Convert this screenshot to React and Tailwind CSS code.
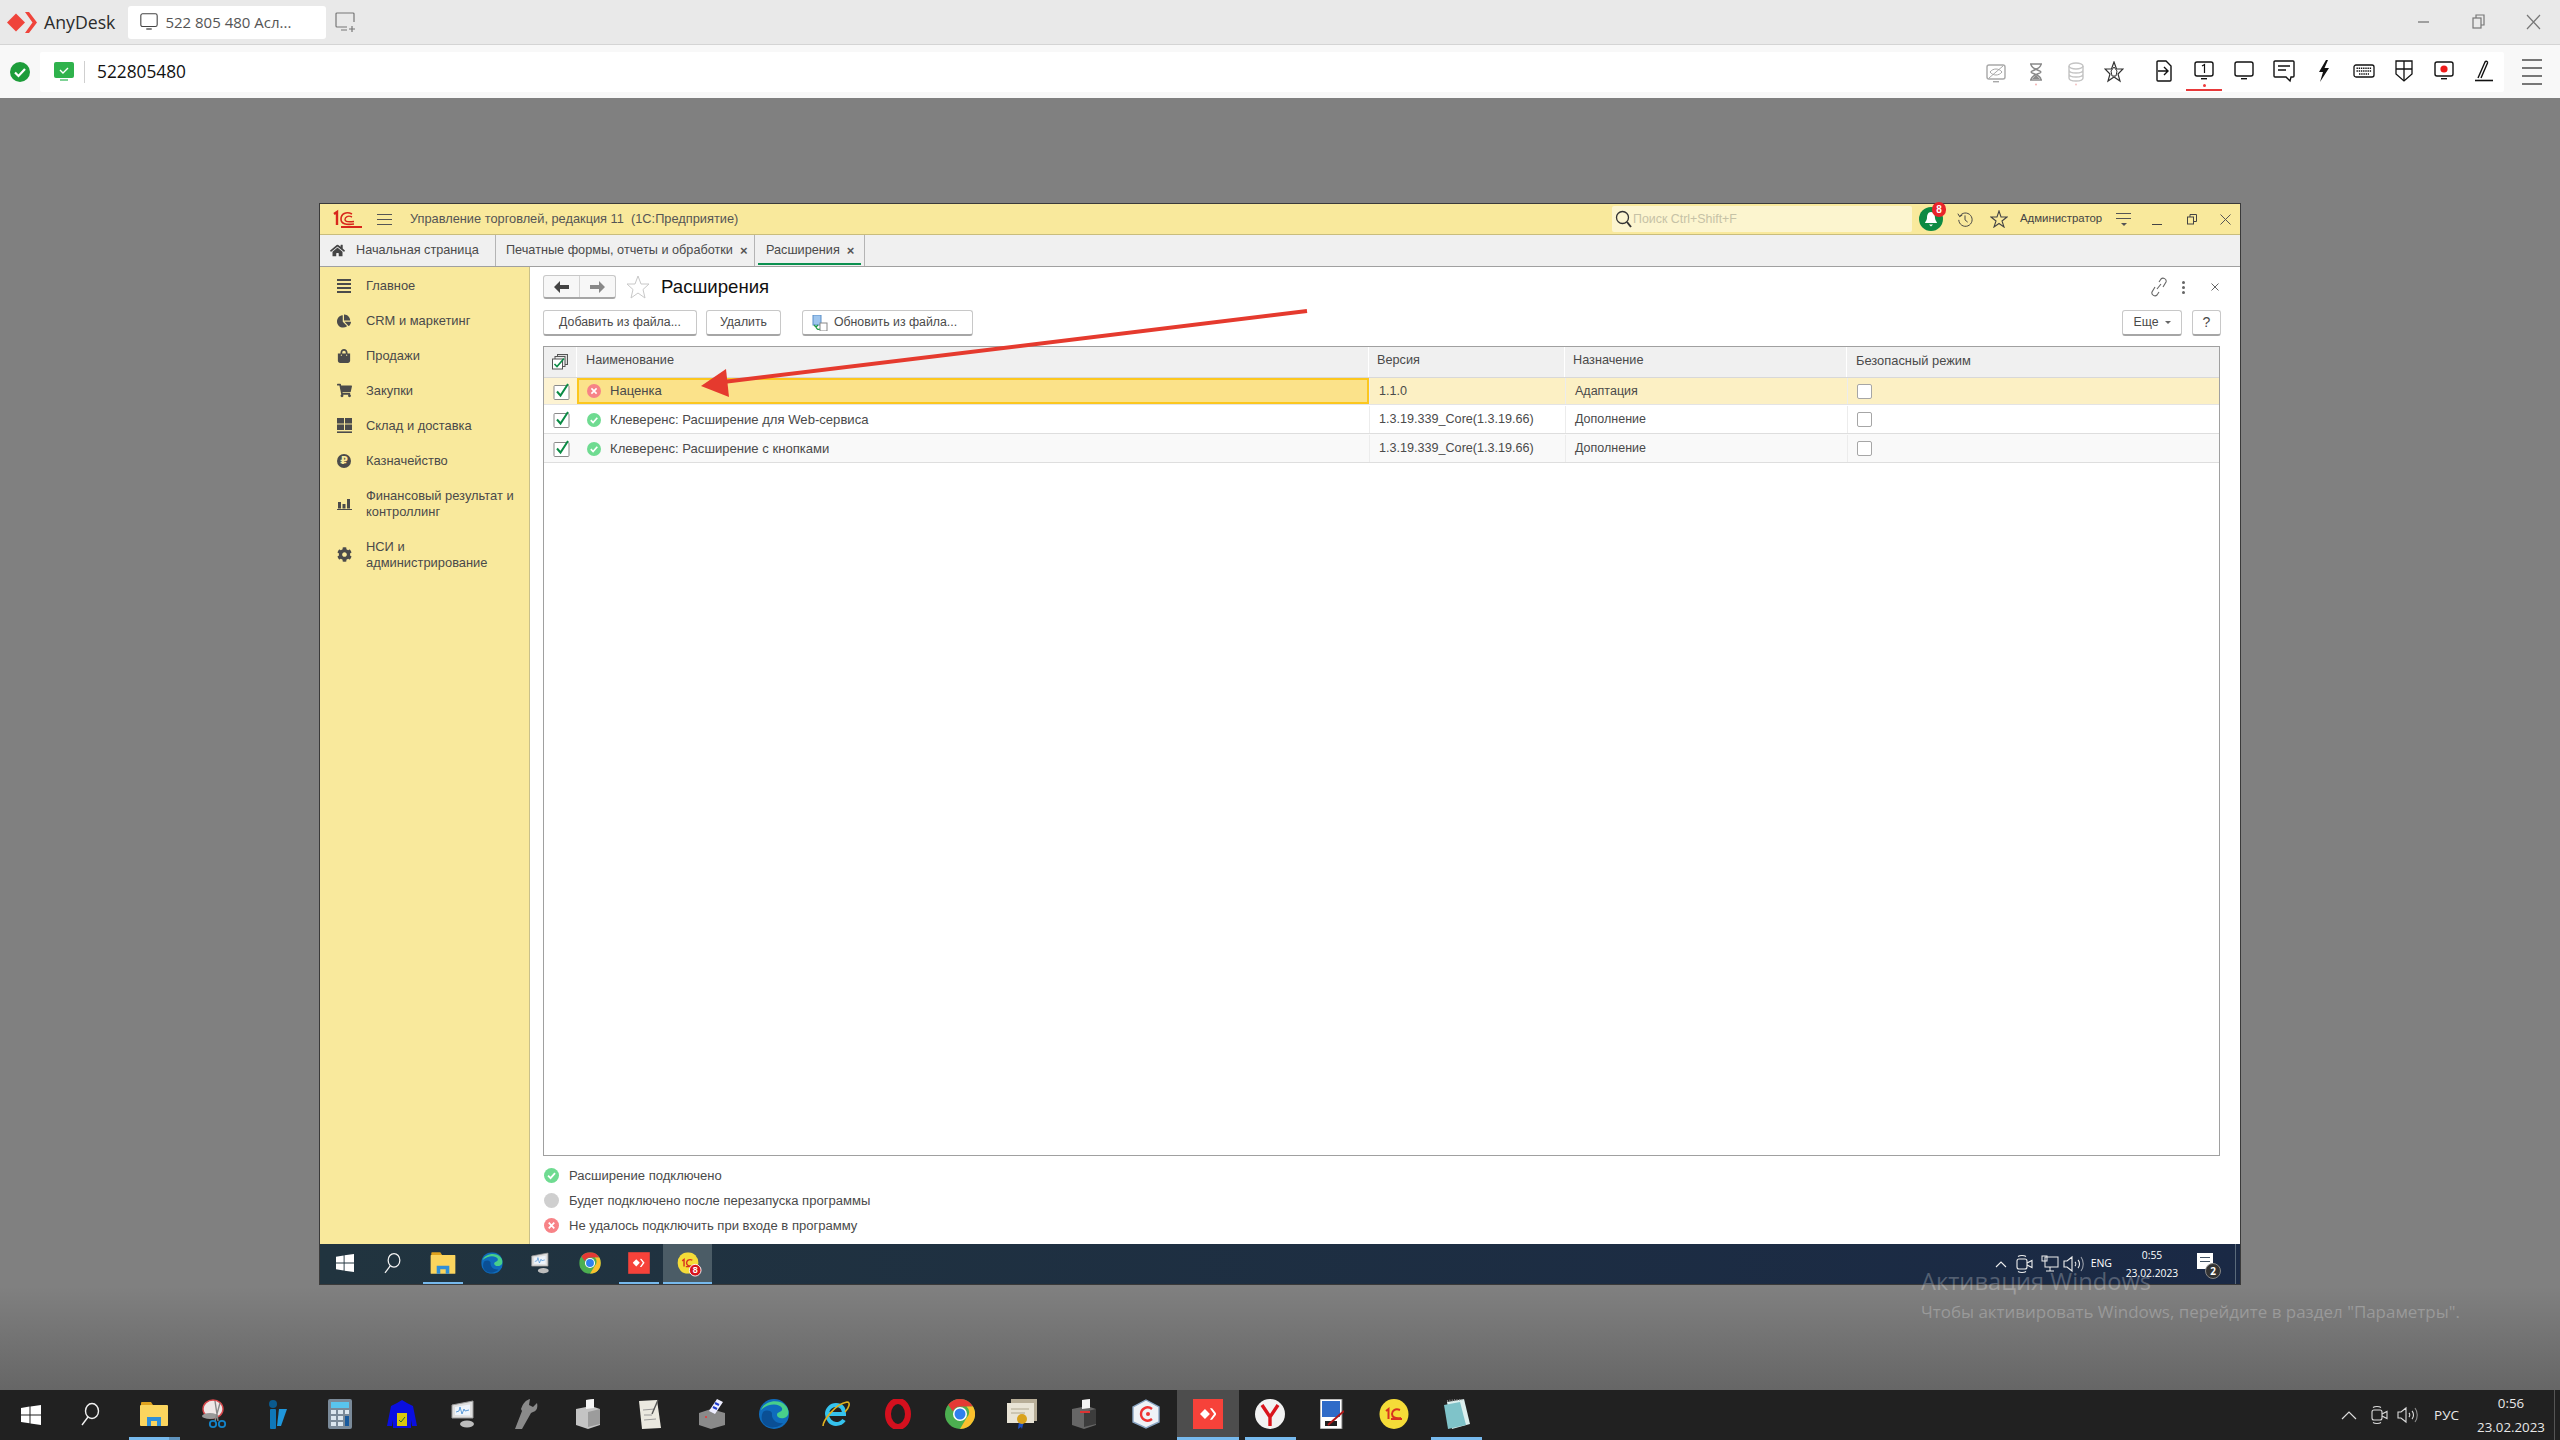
import { FaHome, FaChartPie, FaShoppingBag, FaShoppingCart, FaCog } from "react-icons/fa";

const open = "font-['Open_Sans',sans-serif]";

// ---- anydesk chrome icons ----
const AdLogo = ({ className = "", color = "#ef443b", w = 30, h = 21 }) => (
  <svg width={w} height={h} viewBox="0 0 30 21" className={className} fill={color}>
    <polygon points="0,10.5 9,1.5 18,10.5 9,19.5" />
    <polygon points="18,0 22,0 30,10.5 22,21 18,21 25.5,10.5" />
  </svg>
);

const Screen = ({ children, stroke = "#222", sw = 1.4, size = 22 }) => (
  <svg width={size} height={size} viewBox="0 0 22 22" fill="none" stroke={stroke} strokeWidth={sw}>
    <rect x="2" y="2" width="18" height="14" rx="2" />
    <rect x="8" y="18" width="6" height="1.4" fill={stroke} stroke="none" />
    {children}
  </svg>
);

const ToolIcons = {
  noview: () => (
    <Screen stroke="#a8a8a8">
      <path d="M5 9c3-4 9-4 12 0-3 4-9 4-12 0z" strokeWidth="1" />
      <path d="M4 15L18 3" strokeWidth="1" />
    </Screen>
  ),
  hourglass: () => (
    <svg width="18" height="24" viewBox="0 0 18 24" fill="none" stroke="#8a8a8a" strokeWidth="1.4">
      <path d="M3 2h12M3 18h12M4 2c0 6 10 6 10 8s-10 2-10 8M14 2c0 6-10 6-10 8s10 2 10 8" />
      <path d="M5 17l4-4 4 4z" fill="#8a8a8a" stroke="none" />
      <circle cx="9" cy="22.5" r="1" fill="#f6b4b4" stroke="none" />
    </svg>
  ),
  db: () => (
    <svg width="18" height="24" viewBox="0 0 18 24" fill="none" stroke="#c4c4c4" strokeWidth="1.4">
      <ellipse cx="9" cy="4" rx="7" ry="3" />
      <path d="M2 4v12c0 4 14 4 14 0V4M2 8c0 4 14 4 14 0M2 12c0 4 14 4 14 0" />
      <circle cx="9" cy="22.5" r="1" fill="#f6c4c4" stroke="none" />
    </svg>
  ),
  star: () => (
    <svg width="20" height="22" viewBox="0 0 20 22" fill="none" stroke="#333" strokeWidth="1">
      <polygon points="10,1 12.5,8 19,8 14,13 16,20 10,16 4,20 6,13 1,8 7.5,8" strokeWidth="1.2" />
      <polygon points="10,6 13,10 12,15 8,15 7,10" />
    </svg>
  ),
  file: () => (
    <svg width="16" height="22" viewBox="0 0 16 22" fill="none" stroke="#111" strokeWidth="1.4">
      <path d="M2 1h8l5 5v14a1 1 0 0 1-1 1H2a1 1 0 0 1-1-1V2a1 1 0 0 1 1-1z" />
      <path d="M2 11h10M8 7l4 4-4 4" />
    </svg>
  ),
  one: () => (
    <Screen stroke="#111">
      <path d="M9 6l2.5-1.5V13" strokeWidth="1.2" />
    </Screen>
  ),
  screen: () => <Screen stroke="#111" />,
  chat: () => (
    <svg width="22" height="24" viewBox="0 0 22 24" fill="none" stroke="#111" strokeWidth="1.4">
      <path d="M2 2h18a1 1 0 0 1 1 1v14a1 1 0 0 1-1 1h-2l-1 4-4-4H2a1 1 0 0 1-1-1V3a1 1 0 0 1 1-1z" />
      <path d="M5 7h12M5 11h8" />
    </svg>
  ),
  bolt: () => (
    <svg width="12" height="22" viewBox="0 0 12 22" fill="#111">
      <polygon points="8,0 1,12 5,12 2,22 11,8 6.5,8 10,0" />
    </svg>
  ),
  keyboard: () => (
    <svg width="22" height="14" viewBox="0 0 22 14" fill="none" stroke="#111" strokeWidth="1.3">
      <rect x="1" y="1" width="20" height="12" rx="2" />
      <path d="M3.5 4.2h15M3.5 7h15M6 10h10" strokeWidth="1.6" strokeDasharray="1.4 .8" />
    </svg>
  ),
  shield: () => (
    <svg width="18" height="22" viewBox="0 0 18 22" fill="none" stroke="#111" strokeWidth="1.3">
      <path d="M1 1h16v13l-8 7-8-7z" />
      <path d="M9 1v19M1 9h16" />
    </svg>
  ),
  record: () => (
    <Screen stroke="#111">
      <circle cx="11" cy="9" r="3.6" fill="#ee1c1c" stroke="none" />
    </Screen>
  ),
  pen: () => (
    <svg width="20" height="22" viewBox="0 0 20 22" fill="none" stroke="#111" strokeWidth="1.4">
      <path d="M4 18L11 2c1-1.5 3-.5 2.5 1L7 18" />
      <path d="M1 20.5h18" strokeWidth="1.6" />
    </svg>
  ),
};

const TOOLS_B = ["file", "one", "screen", "chat", "bolt", "keyboard", "shield", "record", "pen"];

function AnyDeskHeader() {
  return (
    <>
      <div className="h-[45px] shrink-0 flex items-center bg-[#e9e9e9] border-b border-[#d4d4d4]">
        <AdLogo className="ml-[7px]" />
        <span className={`ml-[7px] text-[17.7px] text-[#2b2b2b] ${open}`}>AnyDesk</span>
        <div className="ml-[13px] w-[198px] h-[33px] flex items-center bg-white rounded-[3px] pl-[11px]">
          <Screen stroke="#444" sw={1.2} size={20} />
          <span className={`ml-[6px] text-[15px] text-[#555] ${open}`}>522 805 480 Асл...</span>
        </div>
        <div className="ml-[8px] flex">
          <svg width="22" height="22" viewBox="0 0 22 22" fill="none" stroke="#777" strokeWidth="1.2">
            <path d="M20 11V3a1 1 0 0 0-1-1H3a1 1 0 0 0-1 1v12a1 1 0 0 0 1 1h10M7 19h6M15 18h6M18 15v6" />
          </svg>
        </div>
        <div className="ml-auto flex items-center text-[#777]">
          <svg width="55" height="20" viewBox="0 0 55 20" stroke="#777" strokeWidth="1.3" fill="none"><path d="M22 10h11" /></svg>
          <svg width="55" height="20" viewBox="0 0 55 20" stroke="#777" strokeWidth="1.2" fill="none"><rect x="22" y="6" width="8" height="10" /><path d="M25 6V3h8v10h-3" /></svg>
          <svg width="54" height="20" viewBox="0 0 54 20" stroke="#777" strokeWidth="1.2" fill="none"><path d="M21 3l13 14M34 3L21 17" /></svg>
        </div>
      </div>
      <div className="h-[53px] shrink-0 flex items-center bg-[#f8f8f8]">
        <div className="w-[40px] flex justify-center">
          <svg width="20" height="20" viewBox="0 0 20 20">
            <circle cx="10" cy="10" r="10" fill="#1d9d3a" />
            <path d="M5 10.5l3.5 3.5L15 7" stroke="#fff" strokeWidth="2.2" fill="none" />
          </svg>
        </div>
        <div className="flex-1 h-[40px] flex items-center bg-white rounded-[2px]">
          <div className="ml-[14px]">
            <svg width="20" height="22" viewBox="0 0 20 22">
              <rect x="0" y="1" width="20" height="16" rx="2" fill="#2fb24c" />
              <rect x="6" y="18" width="8" height="2" fill="#7fd296" />
              <path d="M6 9l3 3 5-5" stroke="#fff" strokeWidth="1.4" fill="none" />
            </svg>
          </div>
          <div className="ml-[10px] w-px h-[22px] bg-[#cfcfcf]" />
          <span className={`ml-[12px] text-[17.3px] text-[#111] ${open}`}>522805480</span>
          <div className="ml-auto flex items-center h-full">
            {["noview", "hourglass", "db"].map((k) => {
              const I = ToolIcons[k];
              return <div key={k} className="w-[40px] flex justify-center pt-[4px]"><I /></div>;
            })}
            <div className="w-[36px] mr-[12px] flex justify-center"><ToolIcons.star /></div>
            {TOOLS_B.map((k) => {
              const I = ToolIcons[k];
              return (
                <div key={k} className="relative w-[40px] h-full flex items-center justify-center pb-[2px]">
                  <I />
                  {k === "one" && (
                    <>
                      <span className="absolute bottom-[5px] left-[19px] w-[3px] h-[3px] rounded-full bg-[#ee3b3b]" />
                      <span className="absolute bottom-[1px] left-[2px] right-[2px] h-[2px] bg-[#e8393a]" />
                    </>
                  )}
                </div>
              );
            })}
          </div>
        </div>
        <div className="w-[56px] flex flex-col items-center gap-[6px]">
          <span className="w-[20px] h-[2px] bg-[#777]" />
          <span className="w-[20px] h-[2px] bg-[#777]" />
          <span className="w-[20px] h-[2px] bg-[#777]" />
          <span className="w-[20px] h-[2px] bg-[#777]" />
        </div>
      </div>
    </>
  );
}

// ---- windows taskbar icons ----
const Win = () => (
  <svg width="20" height="20" viewBox="0 0 20 20" fill="#fff">
    <polygon points="0,3 8.5,1.6 8.5,9.4 0,9.4" />
    <polygon points="9.5,1.4 20,0 20,9.4 9.5,9.4" />
    <polygon points="0,10.5 8.5,10.5 8.5,18.3 0,17" />
    <polygon points="9.5,10.5 20,10.5 20,20 9.5,18.5" />
  </svg>
);
const Lens = () => (
  <svg className="mr-[4px]" width="20" height="24" viewBox="0 0 20 24" fill="none" stroke="#f2f2f2" strokeWidth="1.4">
    <ellipse cx="12" cy="9" rx="6.5" ry="7.5" />
    <path d="M8 15L2 23" />
  </svg>
);
const Folder = () => (
  <svg width="28" height="26" viewBox="0 0 28 26">
    <path d="M1 2a1 1 0 0 1 1-1h9l2 3h-12z" fill="#e0a31e" />
    <rect x="0" y="4" width="28" height="21" rx="1" fill="#fbd55e" />
    <path d="M7 25v-9h14v9h-4v-5h-6v5z" fill="#2f8fd8" />
  </svg>
);
const Edge = ({ s = 30 }) => (
  <svg width={s} height={s} viewBox="0 0 30 30">
    <circle cx="15" cy="15" r="15" fill="#0f6cbd" />
    <path d="M2 11C5 2 20-1 27 7c4 5 3 11-2 12-4 1-7-1-7-3 0-4 6-2 5-7-3-5-14-5-21 2z" fill="#48cf8a" />
    <path d="M13 14c-1 6 4 11 11 10-3 4-13 7-19 1-3-4-3-8-1-12 3-2 7-2 9 1z" fill="#0a4f95" />
  </svg>
);
const Chrome = ({ s = 30 }) => (
  <svg width={s} height={s} viewBox="0 0 30 30">
    <circle cx="15" cy="15" r="15" fill="#4caf50" />
    <path d="M15 0a15 15 0 0 1 13 7.5H15a7.5 7.5 0 0 0-7 5L3.2 5.8A15 15 0 0 1 15 0z" fill="#e53935" />
    <path d="M28 7.5A15 15 0 0 1 15 30l6.5-11a7.5 7.5 0 0 0 0-11.5z" fill="#fbc02d" />
    <circle cx="15" cy="15" r="7" fill="#fff" />
    <circle cx="15" cy="15" r="5.5" fill="#2f80ed" />
  </svg>
);
const Monitor = ({ s = 28 }) => (
  <svg width={s} height={s} viewBox="0 0 28 28">
    <path d="M2 5l21-4v17L2 18z" fill="#dfdfdf" stroke="#9a9a9a" />
    <path d="M5 7l15-2.4v11L5 15z" fill="#eef4fb" />
    <path d="M6 12l3-1 1-4 2 7 2-5 1 2 4-1" stroke="#5a9bd8" fill="none" />
    <ellipse cx="17" cy="24" rx="7" ry="3.5" fill="#bdbdbd" />
  </svg>
);
const AdTile = ({ s = 30 }) => (
  <div className="bg-[#f6423a] flex items-center justify-center" style={{ width: s, height: s }}>
    <AdLogo color="#fff" w={s * 0.55} h={s * 0.4} />
  </div>
);
const OneCTile = ({ s = 30, badge }) => (
  <div className="relative">
    <svg width={s} height={s} viewBox="0 0 30 30">
      <ellipse cx="15" cy="15" rx="14.5" ry="15" fill="#f5dc38" />
      <path d="M7 12l2.5-2v10M21 11c-5-2-8 1-8 4s3 5 9 4M12 20h11" stroke="#d8321f" strokeWidth="2" fill="none" />
    </svg>
    {badge && (
      <span className="absolute -right-[3px] -bottom-[3px] w-[14px] h-[14px] rounded-full bg-[#d8141c] border border-white text-white text-[10px] font-bold leading-[12px] text-center font-['Liberation_Sans',sans-serif]">
        {badge}
      </span>
    )}
  </div>
);
const Scissors = () => (
  <svg width="28" height="30" viewBox="0 0 28 30" fill="none">
    <ellipse cx="11" cy="10" rx="10" ry="9" fill="#f0e8e8" stroke="#d8484c" strokeWidth="1.4" />
    <ellipse cx="8" cy="17" rx="8" ry="3" fill="#999" />
    <path d="M13 2l3 20M18 4l-5 18" stroke="#888" strokeWidth="1.4" />
    <circle cx="11" cy="25" r="3.2" stroke="#1383c9" strokeWidth="1.8" />
    <circle cx="20" cy="25" r="3.2" stroke="#1383c9" strokeWidth="1.8" />
  </svg>
);
const Bar = () => (
  <svg width="20" height="30" viewBox="0 0 20 30" fill="#0f77b8">
    <circle cx="5" cy="5" r="4" fill="#0a5a8e" />
    <rect x="2" y="10" width="6" height="20" rx="1" />
    <polygon points="11,10 19,10 13,27 9,27" fill="#1f97dc" />
  </svg>
);
const Calc = () => (
  <svg width="24" height="30" viewBox="0 0 24 30">
    <rect width="24" height="30" rx="2" fill="#7a8a99" />
    <rect x="3" y="3" width="18" height="6" fill="#58c5ef" />
    <rect x="3" y="11" width="5" height="4" fill="#dbe6ef" />
    <rect x="10" y="11" width="5" height="4" fill="#dbe6ef" />
    <rect x="17" y="11" width="4" height="4" fill="#dbe6ef" />
    <rect x="3" y="17" width="5" height="4" fill="#dbe6ef" />
    <rect x="10" y="17" width="5" height="4" fill="#dbe6ef" />
    <rect x="3" y="23" width="5" height="4" fill="#dbe6ef" />
    <rect x="10" y="23" width="5" height="4" fill="#dbe6ef" />
    <rect x="17" y="17" width="4" height="10" fill="#175a9e" />
  </svg>
);
const Jacket = () => (
  <svg width="30" height="30" viewBox="0 0 30 30">
    <path d="M10 4l5-3 5 3 6 3 4 20h-5l-1-6v8H6v-8l-1 6H0L4 7z" fill="#0a0fe0" />
    <rect x="10" y="14" width="10" height="13" fill="#d9c80d" />
    <path d="M12 21l2 2 4-5" stroke="#2b6a2b" fill="none" />
  </svg>
);
const Wrench = () => (
  <svg width="26" height="30" viewBox="0 0 26 30" fill="#8a8a8a">
    <path d="M17 0l-1 6 4 2 4-4c1 4 0 8-4 9l-2 1-9 16H2l7-18-1-2c2-6 5-9 9-10z" />
  </svg>
);
const Printer = ({ dark }) => (
  <svg width="28" height="30" viewBox="0 0 28 30">
    <path d="M2 10l10-2v-7l8-1v8l6 2v16l-12 4L2 26z" fill={dark ? "#666" : "#c4c4c4"} />
    <path d="M12 1l8-1v9l-8 1z" fill="#f4f4f4" />
    <path d="M14 28V13l12-3v15z" fill={dark ? "#3c3c3c" : "#9c9c9c"} />
    {dark && <path d="M10 13h10" stroke="#d33" strokeWidth="2" />}
  </svg>
);
const Note = () => (
  <svg width="24" height="30" viewBox="0 0 24 30">
    <path d="M1 2l18-1 4 28-19 1z" fill="#ebe9e0" />
    <path d="M5 11l12-1M6 16l8 0M6 21l12-1" stroke="#9a9a9a" />
    <path d="M20 1l-6 14" stroke="#555" strokeWidth="1.4" />
  </svg>
);
const Stamp = () => (
  <svg width="30" height="30" viewBox="0 0 30 30">
    <path d="M2 14l12-4 14 4v12l-14 4-12-4z" fill="#8a8a8a" />
    <path d="M12 12L20 0l6 3-8 12z" fill="#eef" />
    <path d="M18 4l4 2M16 8l4 2" stroke="#1f3bcc" strokeWidth="2" />
    <circle cx="9" cy="18" r="1" fill="#e33" />
  </svg>
);
const Ie = () => (
  <svg width="30" height="30" viewBox="0 0 30 30" fill="none">
    <path d="M7 15h16c0-6-3-9-8-9s-9 4-9 9 4 10 9 10c3 0 6-1 8-4" stroke="#35c3ee" strokeWidth="4" />
    <path d="M2 27C2 22 14 5 26 3c4 0 2 6-2 10" stroke="#e0b01f" strokeWidth="1.6" />
  </svg>
);
const Opera = () => (
  <svg width="30" height="30" viewBox="0 0 30 30" fill="none">
    <ellipse cx="15" cy="15" rx="10" ry="13" stroke="#d4101e" strokeWidth="6" />
  </svg>
);
const Cert = () => (
  <svg width="30" height="30" viewBox="0 0 30 30">
    <rect x="4" y="0" width="26" height="22" fill="#b8ae98" />
    <rect x="0" y="4" width="27" height="20" fill="#e9e4d6" />
    <path d="M4 10h18M4 14h14" stroke="#b0a890" />
    <path d="M12 22l-1 8 3-2 1 2 2-8z" fill="#1c4fc0" />
    <circle cx="15" cy="20" r="5" fill="#d9a21c" />
  </svg>
);
const Shield = () => (
  <svg width="30" height="30" viewBox="0 0 30 30" fill="none">
    <path d="M15 1l13 7v15l-13 6L2 23V8z" fill="#eef2f7" stroke="#8aa6c4" strokeWidth="1.4" />
    <path d="M21 10c-5-4-11 0-11 5s6 9 11 5" stroke="#e33" strokeWidth="2.4" />
    <circle cx="17" cy="15" r="2" fill="#e33" />
  </svg>
);
const Yandex = () => (
  <svg width="30" height="30" viewBox="0 0 30 30" fill="none">
    <ellipse cx="15" cy="15" rx="15" ry="15" fill="#f2f2f2" />
    <path d="M7 6l8 12 8-12M15 17v10" stroke="#d9141c" strokeWidth="3.4" />
  </svg>
);
const Paint = () => (
  <svg width="24" height="30" viewBox="0 0 24 30">
    <rect width="22" height="30" fill="#fff" stroke="#777" />
    <rect x="2" y="2" width="18" height="16" fill="#2f6bc8" />
    <rect x="5" y="22" width="12" height="5" fill="#222" />
    <path d="M24 12L8 26" stroke="#b11818" strokeWidth="2" />
  </svg>
);
const Notepad = () => (
  <svg width="28" height="30" viewBox="0 0 28 30">
    <path d="M5 3l17-3 6 25-18 5z" fill="#dcefee" />
    <path d="M2 6l16-3 6 23-18 4z" fill="#7fc3c9" />
    <path d="M5 2l17-2" stroke="#888" strokeWidth="2" strokeDasharray="1 1.4" />
  </svg>
);

const BOTTOM_APPS = [
  { id: "lens", icon: Lens },
  { id: "folder", icon: Folder, bar: "stack" },
  { id: "scissors", icon: Scissors },
  { id: "bar", icon: Bar },
  { id: "calc", icon: Calc },
  { id: "jacket", icon: Jacket },
  { id: "monitor", icon: Monitor },
  { id: "wrench", icon: Wrench },
  { id: "printer", icon: Printer },
  { id: "note", icon: Note },
  { id: "stamp", icon: Stamp },
  { id: "edge", icon: Edge },
  { id: "ie", icon: Ie },
  { id: "opera", icon: Opera },
  { id: "chrome", icon: Chrome },
  { id: "cert", icon: Cert },
  { id: "printer2", icon: () => <Printer dark /> },
  { id: "shield", icon: Shield },
  { id: "anydesk", icon: AdTile, active: true, bar: "full" },
  { id: "yandex", icon: Yandex, bar: "normal" },
  { id: "paint", icon: Paint },
  { id: "onec", icon: OneCTile },
  { id: "notepad", icon: Notepad, bar: "normal" },
];

const Cam = ({ color }) => (
  <svg width="18" height="20" viewBox="0 0 18 20" fill="none" stroke={color} strokeWidth="1.1">
    <rect x="1" y="5" width="10" height="10" rx="2" />
    <path d="M11 9l5-2.5v7L11 11M2 2.5c2-1.4 6-1.4 8 0M2 17.5c2 1.4 6 1.4 8 0" />
  </svg>
);
const Speaker = ({ color }) => (
  <svg width="22" height="20" viewBox="0 0 22 20" fill="none" stroke={color} strokeWidth="1.1">
    <path d="M1 7h3l5-4v14l-5-4H1zM12 8c1 1 1 3 0 4M15 6c2 2 2 6 0 8" />
    <path d="M18 3c3 4 3 10 0 14" opacity=".6" />
  </svg>
);

function BottomTaskbar() {
  return (
    <div className="h-[50px] shrink-0 flex bg-[#212121]">
      <div className="w-[61px] flex items-center justify-center"><Win /></div>
      {BOTTOM_APPS.map(({ id, icon: Icon, active, bar }) => (
        <div key={id} className={`w-[62px] flex flex-col items-center ${active ? "bg-[#4d4d4d]" : ""}`}>
          <div className="flex-1 flex items-center justify-center"><Icon /></div>
          {bar === "stack" ? (
            <div className="w-[51px] h-[3px] flex">
              <span className="w-[40px] bg-[#76b9ed]" />
              <span className="flex-1 bg-[#5f93bd]" />
            </div>
          ) : (
            <div className={`h-[3px] ${bar === "full" ? "w-full bg-[#76b9ed]" : bar ? "w-[51px] bg-[#76b9ed]" : "w-[51px]"}`} />
          )}
        </div>
      ))}
      <div className={`flex-1 flex items-center justify-end text-[#e8e8e8] ${open}`}>
        <svg width="16" height="10" viewBox="0 0 16 10" fill="none" stroke="#ddd" strokeWidth="1.2"><path d="M1 9l7-7 7 7" /></svg>
        <div className="ml-[14px]"><Cam color="#ddd" /></div>
        <div className="ml-[8px]"><Speaker color="#ddd" /></div>
        <span className="ml-[15px] text-[13.5px]">РУС</span>
        <div className="ml-[17px] w-[70px] flex flex-col items-center text-[13.3px] leading-[24px]">
          <span>0:56</span>
          <span>23.02.2023</span>
        </div>
        <div className="ml-[8px] w-px h-full bg-[#555]" />
        <div className="w-[5px]" />
      </div>
    </div>
  );
}

// ---- 1C window ----
const OneCLogo = () => (
  <svg width="30" height="20" viewBox="0 0 30 20" fill="none" stroke="#d8271c">
    <path d="M1 5l3-2v13" strokeWidth="2.4" />
    <path d="M19 5c-6-3-11 0-11 5s5 6 13 5" strokeWidth="1.6" />
    <path d="M19 8c-4-2-7 0-7 2.5s4 2.5 9 2" strokeWidth="1.4" />
    <path d="M8 18h21" strokeWidth="2" />
  </svg>
);

const Ok = ({ s = 14 }) => (
  <svg width={s} height={s} viewBox="0 0 14 14">
    <circle cx="7" cy="7" r="7" fill="#6fdb91" />
    <path d="M3.8 7.2l2.3 2.3 4.2-4.7" stroke="#fff" strokeWidth="1.7" fill="none" />
  </svg>
);
const Bad = ({ s = 14 }) => (
  <svg width={s} height={s} viewBox="0 0 14 14">
    <circle cx="7" cy="7" r="7" fill="#f78387" />
    <path d="M4.4 4.4l5.2 5.2M9.6 4.4l-5.2 5.2" stroke="#fff" strokeWidth="1.6" fill="none" />
  </svg>
);
const Wait = ({ s = 14 }) => <span className="block rounded-full bg-[#cfcfcf]" style={{ width: s, height: s }} />;

const Checked = () => (
  <svg className="ml-[2px]" width="18" height="17" viewBox="0 0 18 17" fill="none">
    <rect x="1" y="2.5" width="15" height="14" rx="1" fill="#fff" stroke="#8a8a8a" />
    <path d="M4 8.5l3.5 4L15 1" stroke="#0b8b45" strokeWidth="2" />
  </svg>
);
const Unchecked = () => <span className="block w-[15px] h-[15px] rounded-[2px] bg-white border border-[#a6a6a6]" />;

const SIDE = [
  { label: "Главное", icon: () => (
    <div className="w-[14px] flex flex-col gap-[2px]">
      <span className="h-[2px] bg-[#4b4b4b]" /><span className="h-[2px] bg-[#4b4b4b]" /><span className="h-[2px] bg-[#4b4b4b]" /><span className="h-[2px] bg-[#4b4b4b]" />
    </div>
  ) },
  { label: "CRM и маркетинг", icon: () => <FaChartPie size={14} color="#4b4b4b" /> },
  { label: "Продажи", icon: () => <FaShoppingBag size={14} color="#4b4b4b" /> },
  { label: "Закупки", icon: () => <FaShoppingCart size={15} color="#4b4b4b" /> },
  { label: "Склад и доставка", icon: () => (
    <svg width="15" height="15" viewBox="0 0 15 15" fill="#4b4b4b">
      <rect width="7" height="5.5" /><rect x="8" width="7" height="5.5" /><rect y="6.5" width="7" height="5.5" /><rect x="8" y="6.5" width="7" height="5.5" /><rect y="13.4" width="15" height="1.6" />
    </svg>
  ) },
  { label: "Казначейство", icon: () => (
    <span className="w-[14px] h-[14px] rounded-full bg-[#4b4b4b] text-[#f9e99c] text-[11px] leading-[14px] font-bold text-center font-['DejaVu_Sans',sans-serif]">₽</span>
  ) },
  { label: "Финансовый результат и контроллинг", tall: true, icon: () => (
    <svg width="15" height="12" viewBox="0 0 15 12" fill="#4b4b4b">
      <rect x="1" y="4" width="3" height="6.5" /><rect x="5.5" y="6" width="3" height="4.5" /><rect x="10" y="1" width="3" height="9.5" /><rect y="11" width="15" height="1" />
    </svg>
  ) },
  { label: "НСИ и администрирование", tall: true, icon: () => <FaCog size={15} color="#4b4b4b" /> },
];

const ROWS = [
  { name: "Наценка", ver: "1.1.0", kind: "Адаптация", sel: true },
  { name: "Клеверенс: Расширение для Web-сервиса", ver: "1.3.19.339_Core(1.3.19.66)", kind: "Дополнение" },
  { name: "Клеверенс: Расширение с кнопками", ver: "1.3.19.339_Core(1.3.19.66)", kind: "Дополнение", alt: true },
];

const cols = "grid grid-cols-[33px_792px_196px_282px_1fr]";
const btn = "h-[26px] flex items-center justify-center rounded-[3px] bg-white border border-[#c8c8c8] border-b-[2px] border-b-[#a6a6a6] text-[#4a4a4a] text-[12.3px]";

function Window1C() {
  return (
    <div className="w-[1922px] h-[1082px] flex flex-col bg-white border border-[#3a3a3a] font-['Liberation_Sans',sans-serif] text-[12.7px] text-[#4a4a4a]">
      {/* title */}
      <div className="h-[31px] shrink-0 flex items-center bg-[#f9e99c] border-b border-[#c9bd7d]">
        <div className="ml-[13px]"><OneCLogo /></div>
        <div className="ml-[14px] w-[15px] flex flex-col gap-[4px]">
          <span className="h-px bg-[#555]" /><span className="h-px bg-[#555]" /><span className="h-px bg-[#555]" />
        </div>
        <span className="ml-[18px] text-[12.8px] whitespace-pre text-[#555]">Управление торговлей, редакция 11  (1С:Предприятие)</span>
        <div className="ml-auto w-[300px] h-[26px] flex items-center bg-[#fcf5cf] rounded-[2px]">
          <svg className="ml-[3px]" width="17" height="18" viewBox="0 0 17 18" fill="none" stroke="#333" strokeWidth="1.3">
            <circle cx="7.5" cy="7.5" r="6" /><path d="M12 12l4 5" strokeWidth="2" />
          </svg>
          <span className="ml-[1px] text-[12.4px] text-[#c6c2a6]">Поиск Ctrl+Shift+F</span>
        </div>
        <div className="relative ml-[7px] w-[24px] h-[24px] rounded-full bg-[#0d8a43] flex items-center justify-center">
          <svg width="14" height="16" viewBox="0 0 14 16" fill="#fff"><path d="M7 1c3 0 4 3 4 6 0 2 2 4 2 5H1c0-1 2-3 2-5 0-3 1-6 4-6zM5 13.5h4L7 15.5z" /></svg>
          <span className="absolute -top-[5px] -right-[3px] w-[14px] h-[15px] rounded-full bg-[#e8232a] text-white text-[10px] font-bold leading-[15px] text-center">8</span>
        </div>
        <div className="ml-[14px] w-[16px] flex justify-center">
          <svg width="18" height="18" viewBox="0 0 18 18" fill="none" stroke="#444" strokeWidth="1.1"><path d="M3 6a7.5 7.5 0 1 1-1 4M1 3l2 3.4L6 4.6M9 5v5l3 2.5" /></svg>
        </div>
        <div className="ml-[17px] w-[18px] flex justify-center">
          <svg width="18" height="18" viewBox="0 0 18 18" fill="none" stroke="#444" strokeWidth="1.1"><polygon points="9,1 11,7 17,7 12,11 14,17 9,13.5 4,17 6,11 1,7 7,7" /></svg>
        </div>
        <span className="ml-[12px] w-[83px] text-[11.4px] text-[#444] whitespace-nowrap">Администратор</span>
        <div className="ml-[13px] w-[15px] flex flex-col items-center gap-[4px]">
          <span className="w-full h-px bg-[#555]" /><span className="w-full h-px bg-[#555]" />
          <span className="w-0 h-0 border-x-[3px] border-t-[3px] border-x-transparent border-t-[#555]" />
        </div>
        <div className="ml-[16px] w-[20px] flex justify-center pt-[10px]"><span className="w-[10px] h-px bg-[#444]" /></div>
        <div className="ml-[15px] w-[20px] flex justify-center">
          <svg width="10" height="11" viewBox="0 0 10 11" fill="none" stroke="#444"><rect x=".5" y="3" width="6" height="7" /><path d="M3 3V.5h6.5v7H7" /></svg>
        </div>
        <div className="ml-[13px] mr-[5px] w-[20px] flex justify-center">
          <svg width="11" height="11" viewBox="0 0 11 11" stroke="#555" fill="none"><path d="M.5.5l10 10M10.5.5l-10 10" /></svg>
        </div>
      </div>

      {/* tabs */}
      <div className="h-[32px] shrink-0 flex bg-[#f0f0f0] border-b border-[#a0a0a0]">
        <div className="w-[176px] flex items-center border-r border-[#b4b4b4]">
          <FaHome className="ml-[10px]" size={15} color="#444" />
          <span className="ml-[11px]">Начальная страница</span>
        </div>
        <div className="w-[259px] flex items-center border-r border-[#b4b4b4]">
          <span className="ml-[10px]">Печатные формы, отчеты и обработки</span>
          <span className="ml-[7px] text-[13px] font-bold text-[#555]">×</span>
        </div>
        <div className="w-[110px] flex items-center border-r border-[#b4b4b4] relative">
          <span className="ml-[11px]">Расширения</span>
          <span className="ml-[7px] text-[13px] font-bold text-[#555]">×</span>
          <span className="absolute left-[3px] right-[3px] bottom-[1px] h-[2px] bg-[#0b9150]" />
        </div>
      </div>

      <div className="flex-1 min-h-0 flex">
        {/* sidebar */}
        <div className="w-[210px] shrink-0 pt-[1px] bg-[#f9e99c] border-r border-[#c9c08a] text-[12.9px]">
          {SIDE.map(({ label, icon: Icon, tall }) => (
            <div key={label} className={`flex items-center pl-[14px] ${tall ? "h-[51px]" : "h-[35px]"}`}>
              <div className="w-[20px] flex justify-center"><Icon /></div>
              <span className="ml-[12px] w-[155px] leading-[16px]">{label}</span>
            </div>
          ))}
        </div>

        {/* main */}
        <div className="flex-1 min-w-0 flex flex-col pl-[13px] pr-[20px] pt-[8px]">
          <div className="h-[24px] shrink-0 flex items-center">
            <div className="w-[73px] h-[24px] flex rounded-[3px] bg-[#f7f7f7] border border-[#c8c8c8] border-b-[2px] border-b-[#a6a6a6]">
              <div className="w-[36px] flex items-center justify-center border-r border-[#d4d4d4]">
                <svg width="15" height="12" viewBox="0 0 15 12" fill="#444"><path d="M0 6l6-6v4h9v4H6v4z" /></svg>
              </div>
              <div className="flex-1 flex items-center justify-center">
                <svg width="15" height="12" viewBox="0 0 15 12" fill="#888"><path d="M15 6L9 0v4H0v4h9v4z" /></svg>
              </div>
            </div>
            <svg className="ml-[10px]" width="24" height="24" viewBox="0 0 24 24" fill="none" stroke="#c8c8c8"><polygon points="12,1 15,9 23,9 17,14.5 19,23 12,18 5,23 7,14.5 1,9 9,9" /></svg>
            <h1 className="ml-[11px] text-[18.6px] leading-[24px] text-[#111]">Расширения</h1>
            <div className="ml-auto flex items-center mr-[-1px]">
              <svg width="18" height="20" viewBox="0 0 18 20" fill="none" stroke="#666" strokeWidth="1.1"><path d="M7 12l4-5M9 5l2-3c2-2 6 0 5 3l-3 5M9 15l-2 3c-2 2-6 0-5-3l3-5" /></svg>
              <div className="ml-[14px] flex flex-col gap-[2px]">
                <span className="w-[3px] h-[3px] bg-[#666] rounded-full" /><span className="w-[3px] h-[3px] bg-[#666] rounded-full" /><span className="w-[3px] h-[3px] bg-[#666] rounded-full" />
              </div>
              <svg className="ml-[26px]" width="8" height="8" viewBox="0 0 8 8" stroke="#666" fill="none"><path d="M.5.5l7 7M7.5.5l-7 7" /></svg>
              <div className="w-[2px]" />
            </div>
          </div>

          <div className="mt-[11px] h-[26px] shrink-0 flex">
            <div className={`${btn} w-[154px]`}>Добавить из файла...</div>
            <div className={`${btn} w-[75px] ml-[9px]`}>Удалить</div>
            <div className={`${btn} w-[171px] ml-[21px] pr-[6px]`}>
              <svg className="mr-[6px]" width="16" height="16" viewBox="0 0 16 16">
                <rect x="1" y="0" width="8" height="10" fill="#9ec5ee" stroke="#5b8fc7" />
                <rect x="8" y="8" width="7" height="8" fill="#fff" stroke="#888" />
                <path d="M4 11c0 3 2 4 4 3M2 10l2 2 2-2" stroke="#1f9a45" strokeWidth="1.3" fill="none" />
              </svg>
              Обновить из файла...
            </div>
            <div className={`${btn} w-[60px] ml-auto gap-[6px]`}>
              Еще <span className="w-0 h-0 border-x-[3px] border-t-[3px] border-x-transparent border-t-[#666]" />
            </div>
            <div className={`${btn} w-[29px] ml-[10px] mr-[-1px] text-[14px]`}>?</div>
          </div>

          {/* table */}
          <div className="mt-[10px] flex-1 min-h-0 border border-[#a0a0a0]">
            <div className={`${cols} h-[31px] bg-[#f0f0f0] border-b border-[#d8d8d8]`}>
              <div className="flex items-center justify-center border-r border-white">
                <svg width="16" height="16" viewBox="0 0 16 16" fill="none" stroke="#555">
                  <rect x="5.5" y=".5" width="10" height="10" fill="#ddd" />
                  <rect x="3" y="2.5" width="10" height="10" fill="#eee" />
                  <rect x=".5" y="5" width="10" height="10" fill="#fff" />
                  <path d="M2.5 10l2.5 2.5 7-8" stroke="#0b8b45" strokeWidth="1.6" />
                </svg>
              </div>
              <div className="flex items-center pl-[9px] pb-[2px] border-r border-white">Наименование</div>
              <div className="flex items-center pl-[8px] pb-[2px] border-r border-white">Версия</div>
              <div className="flex items-center pl-[8px] pb-[2px] border-r border-white">Назначение</div>
              <div className="flex items-center pl-[9px] pb-[2px] text-[12.9px]">Безопасный режим</div>
            </div>
            {ROWS.map((r) => (
              <div key={r.name} className={`${cols} border-b ${r.sel ? "h-[27px] bg-[#fcf0c4] border-[#e4e4e4]" : r.alt ? "h-[29px] pt-[1px] bg-[#f9f9f9] border-[#dedede]" : "h-[29px] pt-[1px] bg-white border-[#dedede]"}`}>
                <div className={`flex items-center justify-center ${r.sel ? "bg-[#fdf3d2]" : ""}`}><Checked /></div>
                <div className={`flex items-center text-[13.1px] ${r.sel ? "pl-[8px] bg-[#fbe28a] border-2 border-[#fcc71e]" : "pl-[10px]"}`}>
                  {r.sel ? <Bad /> : <Ok />}
                  <span className="ml-[9px]">{r.name}</span>
                </div>
                <div className="flex items-center pl-[9px] border-l border-[#ececec] text-[12.6px]">{r.ver}</div>
                <div className="flex items-center pl-[9px] border-l border-[#ececec] text-[12.5px]">{r.kind}</div>
                <div className="flex items-center pl-[9px] border-l border-[#ececec]"><Unchecked /></div>
              </div>
            ))}
          </div>

          {/* legend */}
          <div className="h-[88px] shrink-0 pt-[7px] text-[13.05px]">
            <div className="h-[25px] flex items-center"><div className="w-[26px] pl-[1px]"><Ok s={15} /></div>Расширение подключено</div>
            <div className="h-[25px] flex items-center"><div className="w-[26px] pl-[1px]"><Wait s={15} /></div>Будет подключено после перезапуска программы</div>
            <div className="h-[25px] flex items-center"><div className="w-[26px] pl-[1px]"><Bad s={15} /></div>Не удалось подключить при входе в программу</div>
          </div>
        </div>
      </div>

      {/* the remote desktop's own taskbar */}
      <div className="h-[40px] shrink-0 flex bg-[linear-gradient(90deg,#21343f,#1a2945)] text-white">
        {[
          { id: "win", node: <Win /> },
          { id: "lens", node: <Lens /> },
          { id: "folder", node: <Folder />, bar: true },
          { id: "edge", node: <Edge s={24} /> },
          { id: "mon", node: <Monitor s={24} /> },
          { id: "chrome", node: <Chrome s={24} /> },
          { id: "ad", node: <AdTile s={24} />, bar: true },
          { id: "1c", node: <OneCTile s={24} badge="8" />, bar: true, active: true },
        ].map(({ id, node, bar, active }) => (
          <div key={id} className={`w-[49px] flex flex-col items-center ${active ? "bg-[#4b5c66]" : ""}`}>
            <div className="flex-1 flex items-center justify-center scale-90">{node}</div>
            <div className={`h-[2px] ${active ? "w-full bg-[#76b9ed]" : bar ? "w-[40px] bg-[#76b9ed]" : "w-[40px]"}`} />
          </div>
        ))}
        <div className={`flex-1 flex items-center justify-end ${open}`}>
          <svg width="12" height="8" viewBox="0 0 12 8" fill="none" stroke="#eee" strokeWidth="1.1"><path d="M1 7l5-5 5 5" /></svg>
          <div className="ml-[9px]"><Cam color="#eee" /></div>
          <svg className="ml-[7px]" width="18" height="18" viewBox="0 0 18 18" fill="none" stroke="#eee"><rect x="4" y="2" width="13" height="10" /><rect x="1" y="1" width="5" height="5" /><path d="M9 12v4M5 16h8" /></svg>
          <div className="ml-[4px]"><Speaker color="#eee" /></div>
          <span className="ml-[6px] text-[10.5px]">ENG</span>
          <div className="ml-[12px] w-[56px] flex flex-col items-center text-[10.3px] leading-[18px]">
            <span>0:55</span>
            <span>23.02.2023</span>
          </div>
          <div className="relative ml-[17px] mr-[22px] w-[16px] h-[16px] bg-white mb-[6px]">
            <span className="absolute left-[3px] right-[3px] top-[4px] h-px bg-[#456]" />
            <span className="absolute left-[3px] right-[3px] top-[8px] h-px bg-[#456]" />
            <span className="absolute -right-[8px] -bottom-[10px] w-[16px] h-[16px] rounded-full bg-[#333] border border-[#888] text-white text-[10px] font-bold leading-[14px] text-center">2</span>
          </div>
          <div className="w-px h-full bg-[#5a6a7a]" />
          <div className="w-[4px]" />
        </div>
      </div>
    </div>
  );
}

export default function App() {
  return (
    <div className="relative w-[2560px] h-[1440px] flex flex-col overflow-hidden bg-[#808080]">
      <AnyDeskHeader />
      <div className="flex-1 min-h-0 pl-[319px] pt-[105px] bg-[linear-gradient(#808080_92%,#666666)]">
        <Window1C />
      </div>
      <BottomTaskbar />

      {/* annotation arrow drawn over the screenshot */}
      <svg className="absolute left-0 top-0 pointer-events-none" width="2560" height="1440" viewBox="0 0 2560 1440">
        <path d="M1307 311L715 383" stroke="#e53a2e" strokeWidth="4" fill="none" />
        <polygon points="701,386 726,369 729,397" fill="#e53a2e" />
      </svg>

      {/* windows activation watermark */}
      <div className={`absolute left-[1921px] top-[1265px] pointer-events-none text-white/25 whitespace-nowrap ${open}`}>
        <div className="text-[23.7px] leading-[32px]">Активация Windows</div>
        <div className="mt-[3px] text-[16.95px] leading-[24px]">Чтобы активировать Windows, перейдите в раздел "Параметры".</div>
      </div>
    </div>
  );
}
